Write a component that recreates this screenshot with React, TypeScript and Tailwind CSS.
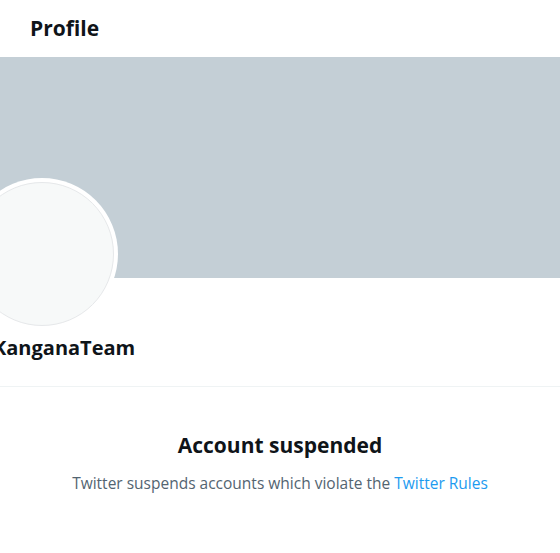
const font = { fontFamily: '"Open Sans", "Noto Sans", sans-serif' };

export default function App() {
  return (
    <div className="w-[560px] h-[553px] overflow-hidden bg-white" style={font}>
      <header className="h-[57px] flex items-center pl-[30px]">
        <h1 className="text-[21px] font-bold text-[#0f1419] leading-none">Profile</h1>
      </header>
      <div className="h-[221px] bg-[#c4cfd6]" />
      <div className="relative h-[54px]">
        <div className="absolute left-[-34px] top-[-100px] w-[152px] h-[152px] rounded-full bg-white p-[4px]">
          <div className="w-full h-full rounded-full bg-[#f7f9f9] border border-[#e6e8ea]" />
        </div>
      </div>
      <div className="h-[55px] border-b border-[#eff3f4] pt-[4px]">
        <div className="ml-[-7px] text-[20px] font-bold text-[#0f1419] leading-[24px]">KanganaTeam</div>
      </div>
      <div className="flex flex-col items-center pt-[44px]">
        <h2 className="text-[21px] font-bold text-[#0f1419] leading-[28px]">Account suspended</h2>
        <p className="mt-[14px] text-[15.5px] text-[#536471] leading-[20px]">
          Twitter suspends accounts which violate the <span className="text-[#1d9bf0]">Twitter Rules</span>
        </p>
      </div>
    </div>
  );
}
